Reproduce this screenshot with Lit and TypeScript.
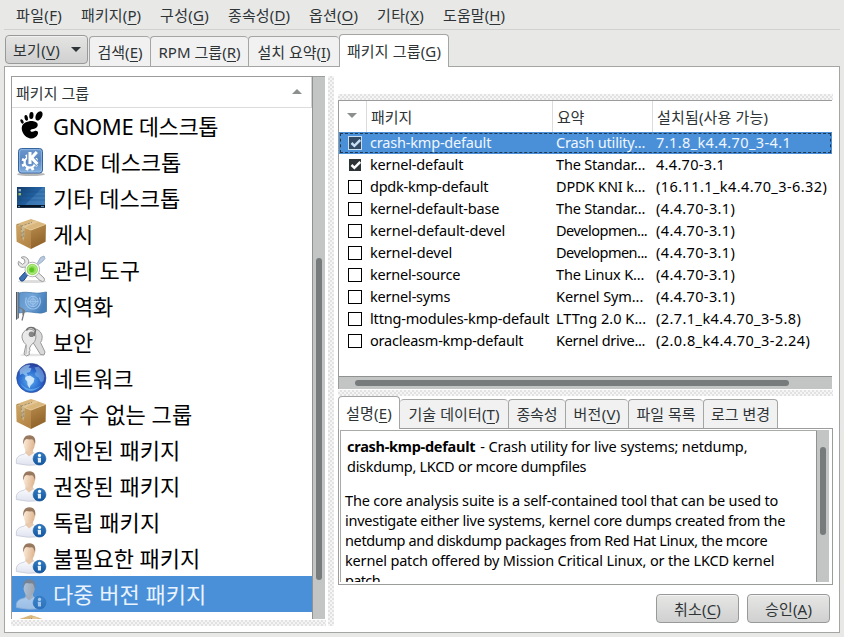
import { LitElement, html, css, svg, nothing } from "lit";
import { customElement, property } from "lit/decorators.js";
import { classMap } from "lit/directives/class-map.js";

/** One line of text, tracked so that it fills a given width. A final "(X)" underlines the access key. */
@customElement("fit-text")
class FitText extends LitElement {
  @property() text = "";
  @property({ type: Number }) w = 0;

  static styles = css`
    :host { display: inline-block; white-space: pre; }
    .t { display: inline-block; }
    u { text-decoration-thickness: 1px; text-underline-offset: 3px; }
  `;

  updated() {
    const t = this.renderRoot.querySelector(".t") as HTMLElement;
    t.style.letterSpacing = "0px";
    const n = (t.textContent ?? "").length;
    if (this.w && n) {
      const gap = (this.w - 0.8 - t.getBoundingClientRect().width) / n;
      t.style.letterSpacing = gap.toFixed(3) + "px";
    }
  }

  render() {
    const m = /^(.*)\((\w)\)$/.exec(this.text);
    return m && /[^\x00-\x7f]/.test(m[1])
      ? html`<span class="t">${m[1]}(<u>${m[2]}</u>)</span>`
      : html`<span class="t">${this.text}</span>`;
  }
}

const MENU: [string, number, number][] = [
  ["파일(F)", 47, 18], ["패키지(P)", 61, 18], ["구성(G)", 50, 18], ["종속성(D)", 63, 18],
  ["옵션(O)", 50, 18], ["기타(X)", 48, 18], ["도움말(H)", 63, 0],
];

const TABS: [string, number, number][] = [
  ["검색(E)", 46, 61], ["RPM 그룹(R)", 83, 98], ["설치 요약(I)", 74, 91], ["패키지 그룹(G)", 95, 110],
];

const DETAIL_TABS: [string, number, number][] = [
  ["설명(E)", 47, 62], ["기술 데이터(T)", 92, 108], ["종속성", 42, 57],
  ["버전(V)", 48, 63], ["파일 목록", 60, 75], ["로그 변경", 60, 75],
];

const GROUPS: [string, string, number][] = [
  ["gnome", "GNOME 데스크톱", 166], ["kde", "KDE 데스크톱", 129], ["desktop", "기타 데스크톱", 128],
  ["box", "게시", 41], ["tools", "관리 도구", 88], ["flag", "지역화", 61], ["keys", "보안", 41],
  ["globe", "네트워크", 81], ["box", "알 수 없는 그룹", 140], ["user", "제안된 패키지", 128],
  ["user", "권장된 패키지", 128], ["user", "독립 패키지", 108], ["user", "불필요한 패키지", 148],
  ["user", "다중 버전 패키지", 154], ["box", "", 0],
];

type Row = { on: boolean; name: string; nw: number; sum: string; sw: number; ver: string; vw: number };
const r = (on: boolean, name: string, nw: number, sum: string, sw: number, ver: string, vw: number): Row =>
  ({ on, name, nw, sum, sw, ver, vw });
const ROWS: Row[] = [
  r(true, "crash-kmp-default", 122, "Crash utility...", 90, "7.1.8_k4.4.70_3-4.1", 136),
  r(true, "kernel-default", 94, "The Standar...", 90, "4.4.70-3.1", 70),
  r(false, "dpdk-kmp-default", 119, "DPDK KNI k...", 90, "(16.11.1_k4.4.70_3-6.32)", 172),
  r(false, "kernel-default-base", 130, "The Standar...", 90, "(4.4.70-3.1)", 80),
  r(false, "kernel-default-devel", 136, "Developmen...", 92, "(4.4.70-3.1)", 80),
  r(false, "kernel-devel", 83, "Developmen...", 92, "(4.4.70-3.1)", 80),
  r(false, "kernel-source", 91, "The Linux K...", 89, "(4.4.70-3.1)", 80),
  r(false, "kernel-syms", 81, "Kernel Sym...", 88, "(4.4.70-3.1)", 80),
  r(false, "lttng-modules-kmp-default", 180, "LTTng 2.0 K...", 91, "(2.7.1_k4.4.70_3-5.8)", 146),
  r(false, "oracleasm-kmp-default", 154, "Kernel drive...", 90, "(2.0.8_k4.4.70_3-2.24)", 155),
];

const BODY: [string, number][] = [
  ["The core analysis suite is a self-contained tool that can be used to", 434],
  ["investigate either live systems, kernel core dumps created from the", 441],
  ["netdump and diskdump packages from Red Hat Linux, the mcore", 423],
  ["kernel patch offered by Mission Critical Linux, or the LKCD kernel", 430],
  ["patch.", 39],
];

const GEAR_TEETH = [0, 45, 90, 135, 180, 225, 270, 315];

const ICONS: Record<string, unknown> = {
  gnome: svg`
    <g fill="#000">
      <ellipse cx="23" cy="4.8" rx="3.1" ry="5" transform="rotate(28 23 4.8)"/>
      <ellipse cx="15.4" cy="4.6" rx="2.1" ry="3.5" transform="rotate(5 15.4 4.6)"/>
      <ellipse cx="10.2" cy="6.9" rx="1.7" ry="2.9" transform="rotate(-14 10.2 6.9)"/>
      <ellipse cx="6" cy="10.4" rx="1.4" ry="2.4" transform="rotate(-28 6 10.4)"/>
      <path d="M5.8 16.2C6.4 11.7 12.5 9.6 17.5 10.2C22.8 10.8 23 15.8 19 17.4C16.5 18.4 14.6 17.8 14.4 19.4C14.3 21 17 20.8 18.2 20.2C20.6 19.1 22.7 20.5 21.9 23C20.8 26.4 16.9 28 14.1 27.4C9 26.3 5.1 21 5.8 16.2Z"/>
    </g>`,
  kde: svg`
    <ellipse cx="15" cy="27.3" rx="14" ry="1.8" fill="#999" opacity=".7"/>
    <rect x="2.5" y="1.5" width="24" height="24.5" rx="3" fill="url(#kb)" stroke="#3565a0"/>
    <rect x="3.6" y="2.6" width="21.8" height="22.3" rx="2" fill="none" stroke="#a9c9ec" stroke-opacity=".6"/>
    <g fill="#fff">
      ${GEAR_TEETH.map((a) => svg`<rect x="12.4" y="7" width="2.8" height="3.2" transform=${`rotate(${a + 22} 13.8 15.4)`} />`)}
    </g>
    <circle cx="13.8" cy="15.4" r="5.2" fill="none" stroke="#fff" stroke-width="2.2"/>
    <path d="M13.600 4V17.500M22 4.500L15.600 10.800L22 17.500" stroke="#6792c8" stroke-width="5" fill="none"/>
    <path d="M14 5V17M20.800 5L15.600 10.800L21.400 17" stroke="#fff" stroke-width="3" fill="none"/>`,
  desktop: svg`
    <rect x="1" y="4" width="28" height="20.5" fill="url(#db)"/>
    <path d="M9 22L27 4H29V22Z" fill="#6aa5dc" opacity=".28"/>
    <path d="M8 9H29M6 13H29M4 17H29" stroke="#164a82" stroke-width=".7" opacity=".5"/>
    <rect x="2.500" y="6" width="2.4" height="2.4" fill="#9db8c9"/><rect x="2.500" y="10" width="2.4" height="2.4" fill="#a3c064"/>
    <rect x="1" y="22" width="28" height="2.8" fill="#061526"/>
    <path d="M2 23.400H4M25 23.400H28" stroke="#5d9acb"/>`,
  box: svg`
    <path d="M0 5.200L15 0L30 5.200L15 11Z" fill="#d9b67c"/>
    <path d="M0 5.200L15 11V30L.6 22.800Z" fill="url(#bl)"/>
    <path d="M30 5.200L15 11V30L29.600 22.800Z" fill="url(#br)"/>
    <path d="M4.500 7L19.500 1.600L23 2.800L8.600 8.500Z" fill="#e3c797"/>
    <path d="M0 5.200L15 11L30 5.200" fill="none" stroke="#e6ca97" stroke-width=".8"/>
    <path d="M5 7.200L8.600 8.600V17L7.200 22L5.300 16Z" fill="#c8b68f"/>
    <path d="M1 5.400L5 6.500L5.400 11M6 13V20M7.800 12V19M5 7.200L16 3.400" fill="none" stroke="#766e58" stroke-width=".8" stroke-dasharray="2.500 1" opacity=".8"/>`,
  tools: svg`
    <ellipse cx="16" cy="26.5" rx="14" ry="1.600" fill="#ddd"/>
    <path d="M5 2.500C9 0 14 4 12.500 8.500L28 23Q29.500 26 26.500 26.500L24 25.500L9 12C4.500 13.500 1 10 2.600 6.400L6.500 9.400L9 7.500L8.500 4.500Z" fill="#e8e8e8" stroke="#999" stroke-width="1"/>
    <path d="M21.5 8L24.500 2.500L28 1L29 3.500L26.5 6.500L21 10.500L11 19L9.500 17.500Z" fill="#b9cbe3" stroke="#8ca0b8" stroke-width=".8"/>
    <path d="M3.500 23L9.500 16.500L12.500 19L7.800 25.500Q4.300 27.500 3.500 23Z" fill="#3d72b4" stroke="#204a87"/>
    <circle cx="16.300" cy="14.500" r="7.300" fill="#fff" stroke="#aaa" stroke-width=".9"/>
    <circle cx="16.300" cy="14.500" r="5.700" fill="#8fdd58"/>
    <circle cx="16.300" cy="14.500" r="4.200" fill="none" stroke="#c4f0a2" stroke-width=".8"/>
    <circle cx="15.700" cy="14.800" r="2.400" fill="#58c41c"/>`,
  flag: svg`
    <path d="M0 1H3V27L0 29Z" fill="url(#pole)"/>
    <path d="M3 2C10 0 18 2.800 24 2Q27 1.600 30.500 1V20.500Q26 23 20 21.700Q11 19.500 3 22Z" fill="url(#fl)" stroke="#4377aa" stroke-width=".8"/>
    <path d="M3 16L8.500 19.500L6 29.500M7 18V24" stroke="#777" stroke-width="1.200" fill="none"/>
    <path d="M10.500 6.500C8 12 11.500 17.800 17 18C22.500 17.800 26 12 23.500 6.500" stroke="#9cc3ea" stroke-width="1.200" fill="none"/>
    <circle cx="17" cy="10.500" r="5.200" fill="#77a9dd" stroke="#a9cbed" stroke-width=".8"/>
    <circle cx="17" cy="10.500" r="2.700" fill="none" stroke="#a9cbed" stroke-width=".7"/>
    <path d="M11.800 10.500H22.200M17 5.300V15.700" stroke="#a9cbed" stroke-width=".6"/>`,
  keys: svg`
    <ellipse cx="16" cy="28" rx="12" ry="1.300" fill="#e3e3e3"/>
    <path d="M15 2.500C20.500 0 26.500 5 26.200 10.500Q26 14 24.500 15.500L29 25L28 28L24.500 27.500L18 17L12 11Z" fill="#d9d9d9" stroke="#999"/>
    <path d="M16 2.500C9 1 4.800 6.500 6.300 12Q7.300 15.500 10 17.500L8 27L10.500 29L13.500 27.500L13 25L14 23.500L13.500 21L15.500 17.500C21 15 21.500 5 16 2.500Z" fill="#e9e9e9" stroke="#999"/>
    <path d="M10.500 18L10 27" stroke="#b5b5b5"/>
    <circle cx="15.500" cy="7.200" r="2.800" fill="#858585"/>
    <path d="M10.500 3.500C11.500 -.3 18.500 -.5 19.500 3.500L18 9" fill="none" stroke="#6f6f6f" stroke-width="1.500"/>`,
  globe: svg`
    <circle cx="15.300" cy="15" r="14.600" fill="url(#gl)" stroke="#24489a" stroke-width=".7"/>
    <path d="M3.500 7C7 2.500 12 1 14.500 2L12.500 4.500L15.500 5.500L14 9L10.500 10L12.200 12.500L10 13L6.500 10.500L4 12Z" fill="#b8dcf6" opacity=".6"/>
    <path d="M9.500 13.500L14 12.500L18.500 15.500L17.500 19.500L14.500 22.500L13.500 25.500L11.500 22L11.200 18.500L9 16Z" fill="#eaf7ff" opacity=".8"/>
    <path d="M18.500 4.500L22.500 3.500L26.500 8L28.500 13L27.500 18L25 19.500L22.500 14.500L20 13.500L18.500 10.500L20.500 8.500Z" fill="#8dbfee" opacity=".5"/>
    <path d="M4 20Q14 31 25.500 22Q20 28 14 28Q8 27 4 20Z" fill="#8fe1ff" opacity=".45"/>`,
  user: svg`
    <path d="M.4 28.500C-.3 21.500 3 20.400 8.500 19L11 16.500H16.500L19 19.500Q24.500 21 25 29.500Q12 31.500 .4 28.500Z" fill="url(#sh)" stroke="#c3c8d6" stroke-width=".8"/>
    <path d="M9.500 14H17V18.500L13 21.500L9.500 18Z" fill="#e8c8aa"/>
    <ellipse cx="13.200" cy="9.300" rx="5.600" ry="7.600" fill="url(#sk)"/>
    <path d="M7.400 9.500C6.200 3.500 9.300 .2 13.500 .3C18.300 .5 20.200 3.800 19 9.700L17.900 6.500Q17.500 4.400 15.500 4.300Q13 4.600 10.500 4Q8.500 4.500 8.200 6.500Z" fill="#98795f"/>
    <circle cx="23.500" cy="23.700" r="6.400" fill="url(#inf)" stroke="#155394" stroke-width=".6"/>
    <circle cx="23.500" cy="20.400" r="1.600" fill="#fff"/>
    <path d="M21.700 22.700H25V27.400H21.900V24.200H21.700Z" fill="#e9eff6"/>`,
};

@customElement("app-icon")
class AppIcon extends LitElement {
  @property() name = "";

  static styles = css`
    :host { display: block; width: 31px; height: 30px; flex: none; }
    svg { display: block; overflow: visible; }
  `;

  render() {
    return html`<svg width="31" height="30" viewBox="0 0 31 30">
      <defs>
        <linearGradient id="kb" x2="0" y2="1"><stop stop-color="#6b98cf"/><stop offset=".5" stop-color="#5583bd"/><stop offset="1" stop-color="#86b2e2"/></linearGradient>
        <linearGradient id="db" x2="1" y2=".6"><stop stop-color="#123a68"/><stop offset=".5" stop-color="#1f5b98"/><stop offset="1" stop-color="#2f6fae"/></linearGradient>
        <linearGradient id="bl" x2=".5" y2="1"><stop stop-color="#cfa768"/><stop offset="1" stop-color="#b38546"/></linearGradient>
        <linearGradient id="br" x2=".3" y2="1"><stop stop-color="#b98d4d"/><stop offset="1" stop-color="#8e6229"/></linearGradient>
        <linearGradient id="fl" x2="1" y2=".3"><stop stop-color="#5f92c6"/><stop offset=".5" stop-color="#72a5d9"/><stop offset="1" stop-color="#477fba"/></linearGradient>
        <linearGradient id="pole" x2="1" y2="0"><stop stop-color="#353b40"/><stop offset=".6" stop-color="#a5acb2"/><stop offset="1" stop-color="#4b5359"/></linearGradient>
        <radialGradient id="gl" cx=".45" cy=".6" r=".6"><stop stop-color="#5eb0f0"/><stop offset=".6" stop-color="#2a6bd0"/><stop offset="1" stop-color="#2a3896"/></radialGradient>
        <linearGradient id="sh" x2="0" y2="1"><stop stop-color="#fdfdff"/><stop offset="1" stop-color="#dfe3ef"/></linearGradient>
        <linearGradient id="sk" x2="1" y2=".2"><stop stop-color="#fdeedd"/><stop offset="1" stop-color="#e0b792"/></linearGradient>
        <linearGradient id="inf" x2="0" y2="1"><stop stop-color="#2f7cc4"/><stop offset="1" stop-color="#1256a0"/></linearGradient>
      </defs>
      ${ICONS[this.name] ?? nothing}
    </svg>`;
  }
}

@customElement("app-root")
class AppRoot extends LitElement {
  static styles = css`
    * { box-sizing: border-box; }
    :host {
      box-sizing: border-box;
      display: flex; flex-direction: column; width: 844px; height: 637px; overflow: hidden;
      background: #e8e8e7; color: #2e3436; padding: 0 4px 4px;
      font: 15px/20px "Noto Sans", "Noto Sans CJK KR", sans-serif;
    }
    .menu { display: flex; height: 30px; padding: 5px 0 0 12px; border-bottom: 1px solid #d0d1d0; flex: none; }
    .item { flex: none; }

    .tabs { display: flex; align-items: flex-end; flex: none; position: relative; z-index: 1; }
    .main-tabs { height: 36px; padding-left: 1px; }
    .view {
      display: flex; align-items: center; justify-content: space-between; width: 83px; height: 29px;
      margin: 0 1px 2px 0; padding: 0 6px 0 7px; border: 1px solid #979a98; border-radius: 4px;
      background: linear-gradient(#e4e4e3, #cfd0cf); box-shadow: inset 0 1px #f1f1f1; flex: none;
    }
    .down { width: 0; border: 5px solid transparent; border-top-color: #2e3436; border-bottom: 0; margin-top: -1px; }
    .tab {
      display: flex; align-items: center; justify-content: center; height: 30px; flex: none;
      border: 1px solid #a4a6a4; border-right: 0; border-bottom: 0; border-radius: 4px 4px 0 0; background: #f1f1f1;
    }
    .tab.on { height: 33px; background: #fff; border-right: 1px solid #a4a6a4; border-bottom: 0; margin-bottom: -1px; }
    .detail-tabs .tab.on + .tab { border-left: 0; }
    .detail-tabs .tab:last-child { border-right: 1px solid #a4a6a4; }

    .page { display: flex; flex: 1; min-height: 0; border: 1px solid #a4a6a4; background: #fff; padding: 9px 0 5px 6px; }
    .left { width: 315px; flex: none; display: flex; flex-direction: column; }
    .listbox { display: flex; height: 543px; flex: none; }
    .list { width: 301px; flex: none; overflow: hidden; border: 1px solid #9b9d9b; border-right: 0; border-bottom: 0; }
    .list-head {
      display: flex; align-items: center; justify-content: space-between; height: 31px;
      padding: 1px 9px 0 4px; border-bottom: 1px solid #dcdcdc; border-right: 1px solid #d3d5d4;
    }
    .up { width: 0; border: 5px solid transparent; border-bottom-color: #8b8f8e; border-top: 0; margin-top: -3px; }
    .group { display: flex; align-items: center; height: 36px; gap: 6px; padding-left: 4px; font-size: 22px; line-height: 36px; color: #000; }
    .group.on { background: #4a90d9; color: #e9f3fd; }
    .group.on app-icon { opacity: .55; }
    .vbar { background: #c2c5c4; border-left: 1px solid #8f9291; border-top: 1px solid #9b9d9b; flex: none; }
    .left .vbar { width: 13px; padding: 181px 0 0 3px; }
    .thumb { background: #777b7b; border-radius: 3px; width: 6px; }
    .left .thumb { height: 322px; }
    .grip { background: repeating-conic-gradient(#e1e2e1 0 25%, #f5f5f5 0 50%) 0 0 / 4px 4px; flex: none; }
    .grip.h { height: 6px; }
    .grip.v { width: 6px; height: 550px; margin: 0 4px 0 2px; }
    .left .grip { margin-top: 1px; }

    .right { display: flex; flex-direction: column; width: 495px; flex: none; padding-top: 18px; }
    .table { display: flex; flex-direction: column; height: 289px; border-top: 1px solid #9b9d9b; border-left: 1px solid #9b9d9b; width: 494px; flex: none; }
    .tr { display: grid; grid-template-columns: 28px 186px 100px 1fr; height: 22px; align-items: center; font-size: 14.5px; color: #000; flex: none; }
    .tr.sel { background: #4a90d9; color: #f0f6fd; outline: 1px dashed #22384e; outline-offset: -2px; }
    .cell { display: flex; align-items: center; height: 100%; padding: 0 0 2px 3px; white-space: nowrap; }
    .cell.tick { padding: 0 0 0 9px; }
    .tr.th { height: 31px; color: #2e3436; font-size: 15px; }
    .th .cell { border-right: 1px solid #dcdcdc; padding: 1px 0 0 4px; }
    .th .cell:last-child { border-right: 0; }
    .th .cell:first-child { padding: 0 0 2px 8px; }
    .sort { width: 0; border: 5px solid transparent; border-top-color: #8b8f8e; border-bottom: 0; }
    .check { width: 14px; height: 14px; border: 1px solid #000; background: #fff; display: flex; }
    .check.full { background: #2e3436; border-color: #fff; }
    .sel .check.full { background: #344b66; border-color: #c7def5; }
    .check svg { display: block; }
    .spring { flex: 1; }
    .hbar { height: 13px; background: #c2c5c4; border-top: 1px solid #8f9291; padding: 3px 0 0 16px; flex: none; }
    .hbar .thumb { width: 434px; height: 6px; }
    .right .grip.h { margin-top: 1px; }
    .right .grip.first { margin-top: 0; }
    .detail-tabs { height: 32px; }
    .detail-tabs .tab.on { height: 33px; }
    .detail-tabs .tab { height: 29px; }
    .detail { height: 157px; border: 1px solid #9b9d9b; padding: 1px 3px 2px 1px; display: flex; flex: none; }
    .doc { flex: 1; border: 1px solid #a9aba9; border-width: 1px 0 0 1px; overflow: hidden; padding: 5px 0 0 4px; font-size: 14.5px; line-height: 20px; color: #000; }
    .line { display: flex; height: 20px; white-space: pre; }
    .line.lead { padding-left: 2px; }
    .line.gap { margin-top: 14px; }
    .strong { font-weight: 700; margin-right: 5px; }
    .detail .vbar { width: 13px; padding: 16px 0 0 3px; border-top-color: #c2c5c4; }
    .detail .thumb { height: 88px; }
    .actions { display: flex; justify-content: flex-end; gap: 8px; margin-top: 9px; padding-right: 3px; }
    .btn {
      width: 83px; height: 29px; display: flex; align-items: center; justify-content: center;
      border: 1px solid #979a98; border-radius: 4px; background: linear-gradient(#e6e6e5, #cfd0cf); box-shadow: inset 0 1px #f3f3f3;
    }
  `;

  private tabs(list: [string, number, number][], active: number) {
    return list.map(([label, w, width], i) => html`
      <div class=${classMap({ tab: true, on: i === active })} style="width:${width}px">
        <fit-text .text=${label} .w=${w}></fit-text>
      </div>`);
  }

  private row(d: Row, i: number) {
    const mark = i === 0 ? "#c7def5" : "#fff";
    return html`<div class=${classMap({ tr: true, sel: i === 0 })}>
      <div class="cell tick"><div class=${classMap({ check: true, full: d.on })}>
        ${d.on ? html`<svg width="12" height="12" viewBox="0 0 12 12"><path d="M2.500 6L5.400 8.800L11.300 3" fill="none" stroke=${mark} stroke-width="2.500"/></svg>` : nothing}
      </div></div>
      <div class="cell"><fit-text .text=${d.name} .w=${d.nw}></fit-text></div>
      <div class="cell"><fit-text .text=${d.sum} .w=${d.sw}></fit-text></div>
      <div class="cell"><fit-text .text=${d.ver} .w=${d.vw}></fit-text></div>
    </div>`;
  }

  render() {
    return html`
      <div class="menu">
        ${MENU.map(([label, w, gap]) => html`<div class="item" style="width:${w + gap}px"><fit-text .text=${label} .w=${w}></fit-text></div>`)}
      </div>
      <div class="tabs main-tabs">
        <div class="view"><fit-text .text=${"보기(V)"} .w=${48}></fit-text><span class="down"></span></div>
        ${this.tabs(TABS, 3)}
      </div>
      <div class="page">
        <div class="left">
          <div class="listbox">
            <div class="list">
              <div class="list-head"><fit-text .text=${"패키지 그룹"} .w=${74}></fit-text><span class="up"></span></div>
              ${GROUPS.map(([icon, label, w], i) => html`
                <div class=${classMap({ group: true, on: i === 13 })}>
                  <app-icon .name=${icon}></app-icon><fit-text .text=${label} .w=${w}></fit-text>
                </div>`)}
            </div>
            <div class="vbar"><div class="thumb"></div></div>
          </div>
          <div class="grip h"></div>
        </div>
        <div class="grip v"></div>
        <div class="right">
          <div class="grip h first"></div>
          <div class="table">
            <div class="tr th">
              <div class="cell"><span class="sort"></span></div>
              <div class="cell"><fit-text .text=${"패키지"} .w=${42}></fit-text></div>
              <div class="cell"><fit-text .text=${"요약"} .w=${28}></fit-text></div>
              <div class="cell"><fit-text .text=${"설치됨(사용 가능)"} .w=${112}></fit-text></div>
            </div>
            ${ROWS.map((d, i) => this.row(d, i))}
            <div class="spring"></div>
            <div class="hbar"><div class="thumb"></div></div>
          </div>
          <div class="grip h"></div>
          <div class="tabs detail-tabs">${this.tabs(DETAIL_TABS, 0)}</div>
          <div class="detail">
            <div class="doc">
              <div class="line lead"><fit-text class="strong" .text=${"crash-kmp-default"} .w=${129}></fit-text><fit-text .text=${"- Crash utility for live systems; netdump,"} .w=${268}></fit-text></div>
              <div class="line lead"><fit-text .text=${"diskdump, LKCD or mcore dumpfiles"} .w=${240}></fit-text></div>
              ${BODY.map(([t, w], i) => html`<div class=${classMap({ line: true, gap: i === 0 })}><fit-text .text=${t} .w=${w}></fit-text></div>`)}
            </div>
            <div class="vbar"><div class="thumb"></div></div>
          </div>
          <div class="actions">
            <div class="btn"><fit-text .text=${"취소(C)"} .w=${48}></fit-text></div>
            <div class="btn"><fit-text .text=${"승인(A)"} .w=${48}></fit-text></div>
          </div>
        </div>
      </div>`;
  }
}
